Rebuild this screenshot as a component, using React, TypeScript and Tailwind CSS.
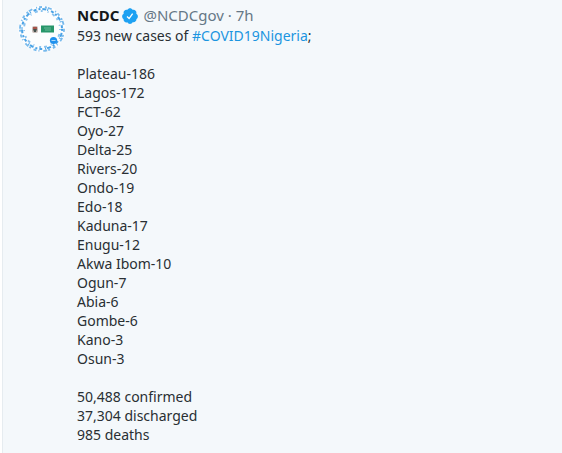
import type { ReactNode } from 'react';

const STATES: [string, number][] = [
  ['Plateau', 186],
  ['Lagos', 172],
  ['FCT', 62],
  ['Oyo', 27],
  ['Delta', 25],
  ['Rivers', 20],
  ['Ondo', 19],
  ['Edo', 18],
  ['Kaduna', 17],
  ['Enugu', 12],
  ['Akwa Ibom', 10],
  ['Ogun', 7],
  ['Abia', 6],
  ['Gombe', 6],
  ['Kano', 3],
  ['Osun', 3],
];

const TOTALS = ['50,488 confirmed', '37,304 discharged', '985 deaths'];

function Avatar() {
  return (
    <svg viewBox="0 0 48 48" className="size-12 shrink-0" aria-hidden>
      <circle cx="24" cy="24" r="23.5" fill="#fcfdfe" />
      {/* wreath of small blue icons */}
      <g fill="none" stroke="#4ba3e6">
        <circle cx="24" cy="24" r="22" strokeWidth="1.8" strokeDasharray="3 3 2 1 4 4 1 2" opacity="0.75" />
        <circle cx="24" cy="24" r="20" strokeWidth="2" strokeDasharray="2 2 4 1 1 3 3 2" />
        <circle cx="24" cy="24" r="18" strokeWidth="1.8" strokeDasharray="1 4 3 3 2 5" opacity="0.65" />
      </g>
      <rect x="14" y="21" width="6" height="7" rx="2" fill="#c9bcb8" />
      <path d="M15 22h4v2h-4z" fill="#a8544a" />
      <path d="M15 24h4l-1 3h-2z" fill="#45514c" />
      <rect x="23" y="20.5" width="13" height="7" fill="#27966a" />
      <path d="M26 23h7M27 25h6" stroke="#7fc3a5" strokeWidth="0.8" />
      <circle cx="35.5" cy="35.5" r="3.6" fill="#1f91ee" />
      <path d="M33.5 35.5h4" stroke="#a9d8fb" />
    </svg>
  );
}

function VerifiedBadge() {
  return (
    <svg viewBox="0 0 24 24" className="size-[18px] shrink-0" role="img" aria-label="Verified account">
      <path
        fill="#1da1f2"
        d="M22.5 12.5c0-1.58-.875-2.95-2.148-3.6.154-.435.238-.905.238-1.4 0-2.21-1.71-3.998-3.818-3.998-.47 0-.92.084-1.336.25C14.818 2.415 13.51 1.5 12 1.5s-2.816.917-3.437 2.25c-.415-.165-.866-.25-1.336-.25-2.11 0-3.818 1.79-3.818 4 0 .494.083.964.237 1.4-1.272.65-2.147 2.018-2.147 3.6 0 1.495.782 2.798 1.942 3.486-.02.17-.032.34-.032.514 0 2.21 1.708 4 3.818 4 .47 0 .92-.086 1.335-.25.62 1.334 1.926 2.25 3.437 2.25 1.512 0 2.818-.916 3.437-2.25.415.163.865.248 1.336.248 2.11 0 3.818-1.79 3.818-4 0-.174-.012-.344-.033-.513 1.158-.687 1.943-1.99 1.943-3.484z"
      />
      <path d="m8 12.8 2.8 2.6 4.7-6.6" fill="none" stroke="#fff" strokeWidth="1.8" />
    </svg>
  );
}

function Line({ children }: { children: ReactNode }) {
  return <p className="min-h-[19px]">{children}</p>;
}

export default function App() {
  return (
    <div className="min-h-screen bg-white pl-0.5">
      <article className="flex min-h-screen gap-[11px] border-l border-[#e6ecf0] bg-[#f4f8fb] pt-[5px] pr-4 pl-[15px] font-['Noto_Sans','Open_Sans',sans-serif] text-[14px] leading-[19px] text-[#292f33]">
        <Avatar />
        <div className="min-w-0 flex-1">
          <header className="flex items-center text-[15px] leading-[21px] text-[#657786]">
            <a href="#ncdc" className="mr-0.5 font-bold text-[#14171a]">
              NCDC
            </a>
            <VerifiedBadge />
            <span className="ml-1">@NCDCgov · 7h</span>
          </header>
          <Line>
            593 new cases of{' '}
            <a href="#covid19nigeria" className="text-[#1b95e0]">
              #COVID19Nigeria
            </a>
            ;
          </Line>
          <div className="my-[19px]">
            {STATES.map(([name, cases]) => (
              <Line key={name}>
                {name}-{cases}
              </Line>
            ))}
          </div>
          {TOTALS.map((total) => (
            <Line key={total}>{total}</Line>
          ))}
        </div>
      </article>
    </div>
  );
}
